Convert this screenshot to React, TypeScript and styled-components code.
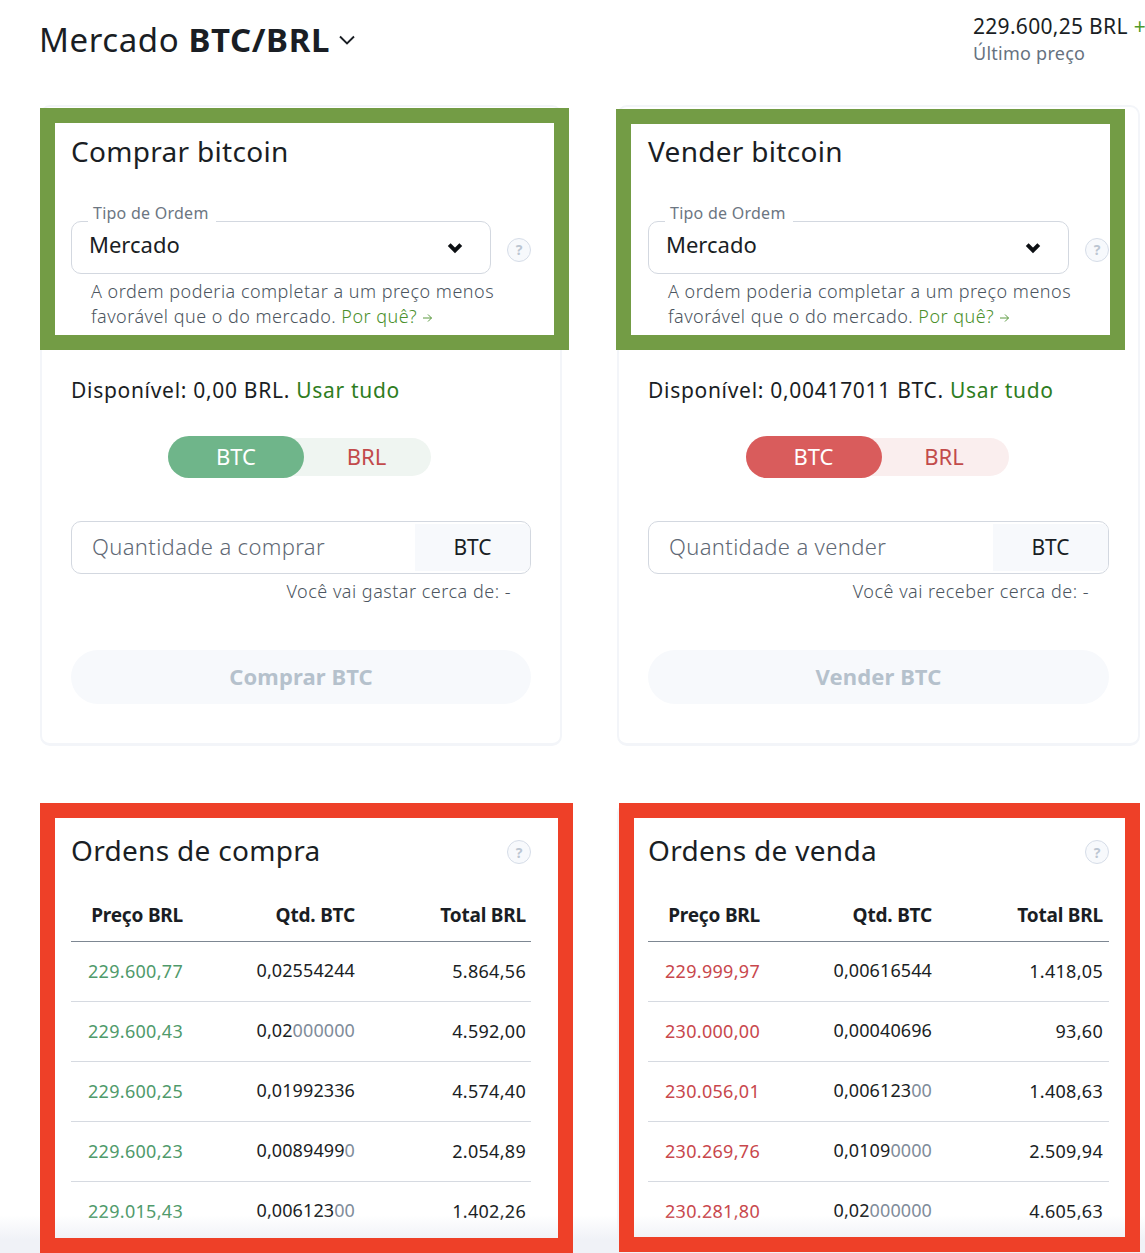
import React from 'react'
import styled, { createGlobalStyle } from 'styled-components'

const GlobalStyle = createGlobalStyle`
  html, body {
    margin: 0;
    padding: 0;
    background: #fff;
    font-family: 'Noto Sans', 'Open Sans', sans-serif;
    color: #1a1e24;
  }
`

const Page = styled.div`
  position: relative;
  width: 1145px;
  height: 1253px;
  overflow: hidden;
  box-sizing: border-box;
  padding-left: 40px;
`

const Header = styled.header`
  display: flex;
  justify-content: space-between;
  height: 105px;
`

const Market = styled.div`
  display: flex;
  align-items: center;
  gap: 9px;
  height: 78px;
  margin-left: -1px;
  font-size: 33px;
  letter-spacing: 0.6px;
  b {
    font-weight: 700;
  }
`

const Price = styled.div`
  width: 172px;
  flex: none;
  padding-top: 12px;
  white-space: nowrap;
  overflow: hidden;
  font-size: 21px;
  line-height: 28px;
  letter-spacing: 0.3px;
  span {
    color: #4e9a2d;
    margin-left: 6px;
  }
  small {
    display: block;
    font-size: 18px;
    line-height: 26px;
    letter-spacing: 0.25px;
    color: #66727f;
  }
`

const Columns = styled.div`
  display: grid;
  grid-template-columns: 522px 523px;
  column-gap: 55px;
  row-gap: 57px;
`

const Card = styled.section`
  box-sizing: border-box;
  border: 2px solid #f3f5f9;
  border-bottom-width: 3px;
  border-radius: 10px;
  padding: 0 29px;
  background: #fff;
`

const TradeCard = styled(Card)`
  height: 641px;
`

const BookCard = styled(Card)`
  height: 520px;
`

const CardTitle = styled.h2`
  margin: 0;
  font-size: 28px;
  font-weight: 400;
  line-height: 38px;
  letter-spacing: 0.3px;
  padding-top: 25px;
`

const SelectRow = styled.div`
  display: flex;
  align-items: center;
  gap: 16px;
  margin-top: 51px;
`

const Select = styled.div`
  position: relative;
  flex: 1;
  box-sizing: border-box;
  height: 53px;
  border: 1px solid #d3d8e0;
  border-radius: 10px;
  padding: 0 27px 7px 17px;
  display: flex;
  align-items: center;
  justify-content: space-between;
  font-size: 22px;
  svg {
    margin-top: 7px;
  }
`

const Legend = styled.span`
  position: absolute;
  left: 16px;
  top: -18px;
  background: #fff;
  padding: 0 7px 0 5px;
  font-size: 16px;
  line-height: 18px;
  letter-spacing: 0.25px;
  color: #6c7682;
`

const Help = styled.span`
  flex: none;
  box-sizing: border-box;
  width: 24px;
  height: 24px;
  margin-top: 4px;
  border: 1px solid #d6dde8;
  border-radius: 50%;
  background: #f7f9fc;
  color: #bcc6d2;
  display: flex;
  align-items: center;
  justify-content: center;
  font-size: 14px;
  font-weight: 700;
`

const Note = styled.p`
  max-width: 420px;
  margin: 5px 0 0 20px;
  font-size: 18px;
  line-height: 25px;
  font-weight: 300;
  letter-spacing: 0.48px;
  color: #4c5560;
  a {
    color: #4a8f2b;
  }
`

const Available = styled.div`
  margin-top: 47px;
  font-size: 21px;
  line-height: 28px;
  letter-spacing: 0.7px;
  a {
    color: #2e7d1e;
  }
`

const ToggleRow = styled.div`
  display: flex;
  justify-content: center;
  margin: 32px 0 0 -3px;
`

const Toggle = styled.div<{ $track: string }>`
  display: flex;
  align-items: center;
  width: 263px;
  height: 38px;
  margin: 2px 0;
  border-radius: 19px;
  background: ${(p) => p.$track};
  font-size: 22px;
`

const ToggleOn = styled.span<{ $color: string }>`
  box-sizing: border-box;
  width: 136px;
  height: 42px;
  padding-bottom: 2px;
  flex: none;
  border-radius: 21px;
  background: ${(p) => p.$color};
  color: #fff;
  display: flex;
  align-items: center;
  justify-content: center;
`

const ToggleOff = styled.span`
  flex: 1;
  padding: 0 2px 2px 0;
  text-align: center;
  color: #c24b4b;
`

const AmountField = styled.div`
  display: flex;
  box-sizing: border-box;
  height: 53px;
  margin-top: 43px;
  border: 1px solid #d3d8e0;
  border-radius: 10px;
  overflow: hidden;
`

const Placeholder = styled.span`
  flex: 1;
  padding: 0 0 3px 20px;
  display: flex;
  align-items: center;
  font-size: 22px;
  font-weight: 300;
  letter-spacing: 0.35px;
  color: #5f6975;
`

const Unit = styled.span`
  width: 115px;
  margin: 2px 0;
  padding-bottom: 2px;
  background: #f7f9fc;
  display: flex;
  align-items: center;
  justify-content: center;
  font-size: 21px;
`

const Hint = styled.div`
  margin: 5px 20px 0 0;
  text-align: right;
  font-size: 18px;
  line-height: 24px;
  font-weight: 300;
  letter-spacing: 0.5px;
  color: #4c5560;
`

const Submit = styled.div`
  box-sizing: border-box;
  height: 54px;
  margin-top: 47px;
  padding-bottom: 2px;
  border-radius: 27px;
  background: #f7f9fc;
  color: #b5c1cc;
  display: flex;
  align-items: center;
  justify-content: center;
  font-size: 22px;
  font-weight: 700;
  letter-spacing: 0.1px;
`

const BookHead = styled.div`
  display: flex;
  align-items: center;
  justify-content: space-between;
  padding: 10px 0 13px;
  ${CardTitle} {
    padding-top: 16px;
  }
  ${Help} {
    margin-top: 20px;
  }
`

const Row = styled.div<{ $head?: boolean }>`
  display: grid;
  grid-template-columns: 112px 172px 171px;
  align-items: center;
  box-sizing: border-box;
  height: 60px;
  padding: ${(p) => (p.$head ? '6px 0 0' : '0 0 2px')};
  border-bottom: 1px solid ${(p) => (p.$head ? '#7d8792' : '#d6dae1')};
  font-size: ${(p) => (p.$head ? '19px' : '18px')};
  font-weight: ${(p) => (p.$head ? 700 : 400)};
  letter-spacing: ${(p) => (p.$head ? '-0.2px' : '0.3px')};
  &:last-child {
    border-bottom: 0;
  }
`

const Cell = styled.span<{ $color?: string }>`
  text-align: right;
  color: ${(p) => p.$color || 'inherit'};
`

const QtyCell = styled(Cell)`
  padding-bottom: 2px;
  letter-spacing: 0.1px;
`

const Dim = styled.span`
  color: #7f8c9a;
`

const Frame = styled.div<{ $color: string; $border: number }>`
  position: absolute;
  box-sizing: border-box;
  border: ${(p) => p.$border}px solid ${(p) => p.$color};
  pointer-events: none;
`

const GreenLeft = styled(Frame)`
  left: 40px;
  top: 108px;
  width: 529px;
  height: 242px;
`

const GreenRight = styled(Frame)`
  left: 616px;
  top: 109px;
  width: 509px;
  height: 241px;
`

const RedLeft = styled(Frame)`
  left: 40px;
  top: 803px;
  width: 533px;
  height: 450px;
`

const RedRight = styled(Frame)`
  left: 619px;
  top: 803px;
  width: 521px;
  height: 449px;
`

const BottomFade = styled.div`
  position: absolute;
  left: 0;
  right: 0;
  bottom: 0;
  height: 38px;
  background: linear-gradient(rgba(240, 242, 247, 0), #f0f2f7 65%);
  pointer-events: none;
`

const TitleChevron = () => (
  <svg width="16" height="10" viewBox="0 0 16 10" fill="none" style={{ flex: 'none', marginTop: 2 }}>
    <path d="M1 1.5 8 8.5l7-7" stroke="#1a1e24" strokeWidth="1.9" />
  </svg>
)

const SelectChevron = () => (
  <svg width="16" height="12" viewBox="0 0 16 12" fill="none" style={{ flex: 'none' }}>
    <path d="M2.2 2.6 8 8.4l5.8-5.8" stroke="#0c0f13" strokeWidth="4" />
  </svg>
)

const Arrow = () => (
  <svg width="11" height="10" viewBox="0 0 11 10" fill="none">
    <path d="M1 5h8.5M6 1.5 9.5 5 6 8.5" stroke="#4a8f2b" strokeWidth="0.9" />
  </svg>
)

type Trade = {
  title: string
  available: string
  on: string
  track: string
  placeholder: string
  hint: string
  submit: string
}

const TradePanel = ({ title, available, on, track, placeholder, hint, submit }: Trade) => (
  <TradeCard>
    <CardTitle>{title}</CardTitle>
    <SelectRow>
      <Select>
        <Legend>Tipo de Ordem</Legend>
        Mercado
        <SelectChevron />
      </Select>
      <Help>?</Help>
    </SelectRow>
    <Note>
      A ordem poderia completar a um preço menos favorável que o do mercado.{' '}
      <a>
        Por quê? <Arrow />
      </a>
    </Note>
    <Available>
      Disponível: {available}. <a>Usar tudo</a>
    </Available>
    <ToggleRow>
      <Toggle $track={track}>
        <ToggleOn $color={on}>BTC</ToggleOn>
        <ToggleOff>BRL</ToggleOff>
      </Toggle>
    </ToggleRow>
    <AmountField>
      <Placeholder>{placeholder}</Placeholder>
      <Unit>BTC</Unit>
    </AmountField>
    <Hint>{hint}</Hint>
    <Submit>{submit}</Submit>
  </TradeCard>
)

type Order = [string, string, string, string]

const BookPanel = ({ title, color, orders }: { title: string; color: string; orders: Order[] }) => (
  <BookCard>
    <BookHead>
      <CardTitle>{title}</CardTitle>
      <Help>?</Help>
    </BookHead>
    <Row $head>
      <Cell>Preço BRL</Cell>
      <Cell>Qtd. BTC</Cell>
      <Cell>Total BRL</Cell>
    </Row>
    {orders.map(([price, qty, zeros, total]) => (
      <Row key={price}>
        <Cell $color={color}>{price}</Cell>
        <QtyCell>
          {qty}
          <Dim>{zeros}</Dim>
        </QtyCell>
        <Cell>{total}</Cell>
      </Row>
    ))}
  </BookCard>
)

const buys: Order[] = [
  ['229.600,77', '0,02554244', '', '5.864,56'],
  ['229.600,43', '0,02', '000000', '4.592,00'],
  ['229.600,25', '0,01992336', '', '4.574,40'],
  ['229.600,23', '0,0089499', '0', '2.054,89'],
  ['229.015,43', '0,006123', '00', '1.402,26'],
]

const sells: Order[] = [
  ['229.999,97', '0,00616544', '', '1.418,05'],
  ['230.000,00', '0,00040696', '', '93,60'],
  ['230.056,01', '0,006123', '00', '1.408,63'],
  ['230.269,76', '0,0109', '0000', '2.509,94'],
  ['230.281,80', '0,02', '000000', '4.605,63'],
]

const App = () => (
  <Page>
    <GlobalStyle />
    <Header>
      <Market>
        <span>
          Mercado <b>BTC/BRL</b>
        </span>
        <TitleChevron />
      </Market>
      <Price>
        229.600,25 BRL<span>+4,12%</span>
        <small>Último preço</small>
      </Price>
    </Header>
    <Columns>
      <TradePanel
        title="Comprar bitcoin"
        available="0,00 BRL"
        on="#6fb58a"
        track="#eff5f1"
        placeholder="Quantidade a comprar"
        hint="Você vai gastar cerca de: -"
        submit="Comprar BTC"
      />
      <TradePanel
        title="Vender bitcoin"
        available="0,00417011 BTC"
        on="#d95c5c"
        track="#faeeee"
        placeholder="Quantidade a vender"
        hint="Você vai receber cerca de: -"
        submit="Vender BTC"
      />
      <BookPanel title="Ordens de compra" color="#4f9a6b" orders={buys} />
      <BookPanel title="Ordens de venda" color="#c8474c" orders={sells} />
    </Columns>
    <BottomFade />
    <GreenLeft $color="#739c45" $border={15} />
    <GreenRight $color="#739c45" $border={15} />
    <RedLeft $color="#ee4028" $border={15} />
    <RedRight $color="#ee4028" $border={15} />
  </Page>
)

export default App
